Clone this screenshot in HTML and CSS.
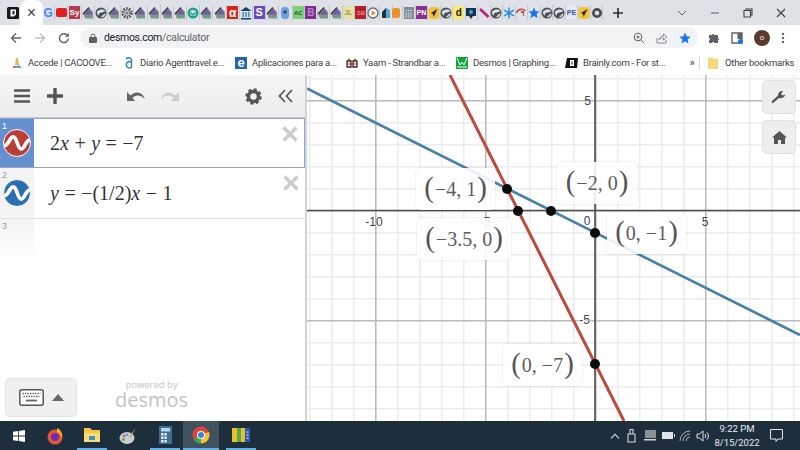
FILE: index.html
```html
<!DOCTYPE html>
<html lang="en">
<head>
<meta charset="utf-8">
<title>Desmos | Graphing Calculator</title>
<link rel="stylesheet" href="styles.css">
</head>
<body>
<svg class="defs" width="0" height="0" aria-hidden="true">
  <symbol id="dz" viewBox="0 0 12 14">
    <path d="M1 8 7 1.5 11 6v6.5H3z" fill="#8a8f94"/>
    <path d="M2.5 8 7 3l3 3.5V11z" fill="#7a5aa8"/>
    <path d="M2 9 6 12h5V8.500z" fill="#6f9f7f"/>
    <path d="M1 8 7 1.500" stroke="#2c3a36" stroke-width="1.300" fill="none"/>
  </symbol>
  <symbol id="globe" viewBox="0 0 12 14">
    <circle cx="6" cy="7" r="5.500" fill="#4b5257"/>
    <path d="M2 5.500C5 2.500 9 3 10.500 5L7 6.500C5 6 3.500 7 4 9.500 2.500 9 1.800 7 2 5.500zM6 11l3.500-3.500 1 .5C10 10 8 12 6 11z" fill="#dfe3e6"/>
  </symbol>
  <symbol id="wave" viewBox="0 0 28 28">
    <path d="M0 17C5 17 6 7.500 10 7.500 14 7.500 14.500 20.500 18.500 20.500 22.500 20.500 23 11 28 11" fill="none" stroke="#fff" stroke-width="4"/>
  </symbol>
</svg>

<header class="chrome">
  <div class="tabstrip">
    <span class="pin-tab"><svg width="14" height="14" viewBox="0 0 14 14"><rect x="1" y="1" width="12" height="12" rx="1.500" fill="#17181a"/><path d="M4.500 3.500h5.500v5l-2 2h-3.500z" fill="#fff"/><rect x="6.500" y="5" width="2" height="3.500" fill="#17181a"/></svg></span>
    <span class="active-tab">×</span>
    <div class="fav-group fav-wide">
      <span class="fav"><b class="g">G</b></span>
      <span class="fav"><i class="yt"></i></span>
      <span class="fav"><b class="box sy">Sy</b></span>
      <span class="fav"><svg class="ic"><use href="#dz"/></svg></span>
      <span class="fav"><svg class="ic"><use href="#globe"/></svg></span>
      <span class="fav"><svg class="ic"><use href="#dz"/></svg></span>
      <span class="fav"><svg width="12" height="14" viewBox="0 0 12 14"><circle cx="6" cy="7" r="4" fill="none" stroke="#555" stroke-width="3.500" stroke-dasharray="1.500 1"/><circle cx="6" cy="7" r="1.500" fill="#777"/></svg></span>
      <span class="fav"><svg class="ic"><use href="#dz"/></svg></span>
      <span class="fav"><svg class="ic"><use href="#dz"/></svg></span>
      <span class="fav"><svg class="ic"><use href="#dz"/></svg></span>
      <span class="fav"><svg class="ic"><use href="#dz"/></svg></span>
      <span class="fav"><svg width="12" height="14" viewBox="0 0 12 14"><circle cx="6" cy="7" r="4.300" fill="none" stroke="#17a589" stroke-width="2.400"/><path d="M3.500 6.500 6 9l2.500-2.500" fill="none" stroke="#17a589" stroke-width="1.500"/></svg></span>
      <span class="fav"><svg class="ic"><use href="#dz"/></svg></span>
      <span class="fav"><svg class="ic"><use href="#dz"/></svg></span>
      <span class="fav"><b class="box alpha">α</b></span>
      <span class="fav"><svg width="12" height="14" viewBox="0 0 12 14"><path d="M6 1 .5 5h11zM1 12h10v1.500H1z" fill="#123f6d"/><path d="M2.500 6h1.500v5H2.500zM5.300 6h1.500v5H5.300zM8 6h1.500v5H8z" fill="#3c8dbc"/></svg></span>
      <span class="fav"><b class="box ess">S</b></span>
      <span class="fav"><svg class="ic"><use href="#dz"/></svg></span>
      <span class="fav"><svg width="12" height="14" viewBox="0 0 12 14"><rect x="2" y="1" width="8" height="12" rx="3.500" fill="#6f9fe0"/><circle cx="6" cy="6" r="1.800" fill="#204f8f"/></svg></span>
      <span class="fav"><b class="box ac">AC</b></span>
      <span class="fav"><b class="box pur">B</b></span>
      <span class="fav"><svg class="ic"><use href="#dz"/></svg></span>
      <span class="fav"><svg class="ic"><use href="#dz"/></svg></span>
      <span class="fav"><b class="box yel">JL</b></span>
      <span class="fav"><b class="box red">SB</b></span>
      <span class="fav"><svg width="12" height="14" viewBox="0 0 12 14"><circle cx="6" cy="7" r="5" fill="#fff" stroke="#5a6b75" stroke-width="1.300"/><path d="M4.500 4.500 9 7l-4.500 2.500z" fill="#e58a1f"/></svg></span>
      <span class="fav"><svg width="12" height="14" viewBox="0 0 12 14"><path d="M6 2 10 5v7H2V6z" fill="#17324a"/><path d="M6 2 10 5v7H6z" fill="#5aa7c7"/></svg></span>
    </div>
    <div class="fav-group fav-narrow">
      <span class="fav"><svg width="12" height="14" viewBox="0 0 12 14"><rect x="2" y="2" width="8" height="10" rx="2.500" fill="#ee8f2c"/></svg></span>
      <span class="fav"><svg width="12" height="14" viewBox="0 0 12 14"><rect x="1" y="1" width="10" height="12" fill="#7b8a94"/><path d="M2.500 4.500h7M2.500 7h7M2.500 9h7M2.500 11h7" stroke="#e6e9eb" stroke-width="1" stroke-dasharray="1.500 .8"/></svg></span>
      <span class="fav"><b class="box pn">PN</b></span>
      <span class="fav"><svg width="12" height="14" viewBox="0 0 12 14"><rect x=".500" y="1" width="11" height="12" rx="3" fill="#f3c23d"/><path d="M9.500 3 3 7l2 1 .5 3z" fill="#27282a"/></svg></span>
      <span class="fav"><svg class="ic"><use href="#globe"/></svg></span>
      <span class="fav"><b class="box dd">d</b></span>
      <span class="fav"><svg width="12" height="14" viewBox="0 0 12 14"><path d="M1 2h10v8H8l-2 3-2-3H1z" fill="#12344f"/><circle cx="6" cy="6" r="2" fill="#4fa3c7"/></svg></span>
      <span class="fav"><svg width="12" height="14" viewBox="0 0 12 14"><path d="M2 3 10.500 11" stroke="#c2187f" stroke-width="2.600"/></svg></span>
      <span class="fav"><svg class="ic"><use href="#globe"/></svg></span>
      <span class="fav"><svg width="12" height="14" viewBox="0 0 12 14"><path d="M6 1.500v11M1.200 4.200l9.600 5.600M10.800 4.200 1.200 9.800" stroke="#1f8fd6" stroke-width="1.500"/></svg></span>
      <span class="fav"><svg width="12" height="14" viewBox="0 0 12 14"><path d="M1.500 7C2.500 3 8 2 10.500 5" fill="none" stroke="#c0504d" stroke-width="1.600"/><path d="M6 5h3v5H8V7H6z" fill="#c0504d"/></svg></span>
      <span class="fav"><svg width="12" height="14" viewBox="0 0 12 14"><path d="M6 1.500 7.600 5.200l4 .3-3 2.600 1 3.900L6 9.900 2.400 12l1-3.900-3-2.600 4-.3z" fill="#1a73e8"/></svg></span>
      <span class="fav"><svg class="ic"><use href="#globe"/></svg></span>
      <span class="fav"><svg class="ic"><use href="#globe"/></svg></span>
      <span class="fav"><b class="box pe">PE</b></span>
      <span class="fav"><svg width="12" height="14" viewBox="0 0 12 14"><rect x=".500" y="1" width="11" height="12" rx="3" fill="#f3c23d"/><path d="M9.500 3 3 7l2 1 .5 3z" fill="#27282a"/></svg></span>
      <span class="fav"><svg width="12" height="14" viewBox="0 0 12 14"><circle cx="6" cy="7" r="5" fill="#4a4f52"/><circle cx="6" cy="7" r="2.300" fill="#dfe1e3"/></svg></span>
    </div>
    <svg class="newtab" width="12" height="12" viewBox="0 0 12 12"><path d="M6 1v10M1 6h10" stroke="#2f3235" stroke-width="1.700"/></svg>
    <div class="win-ctrl">
      <svg width="10" height="6" viewBox="0 0 10 6"><path d="M1 1 5 5l4-4" fill="none" stroke="#5f6368" stroke-width="1"/></svg>
      <svg width="10" height="10" viewBox="0 0 10 10"><path d="M1 5h8" stroke="#5f6368" stroke-width="1.100"/></svg>
      <svg width="10" height="10" viewBox="0 0 10 10"><path d="M1 2.500h6.500V9H1zM3 2.500V1h6v6H7.500" fill="none" stroke="#3c4043" stroke-width="1.100"/></svg>
      <svg width="10" height="10" viewBox="0 0 10 10"><path d="M1 1 9 9M9 1 1 9" stroke="#3c4043" stroke-width="1.100"/></svg>
    </div>
  </div>

  <div class="toolbar">
    <svg class="nav" width="12" height="12" viewBox="0 0 12 12"><path d="M11 6H2M6 1.500 1.500 6 6 10.500" fill="none" stroke="#5f6368" stroke-width="1.400"/></svg>
    <svg class="nav" width="12" height="12" viewBox="0 0 12 12"><path d="M1 6h9M6 1.500 10.500 6 6 10.500" fill="none" stroke="#bdc1c6" stroke-width="1.400"/></svg>
    <svg class="nav" width="12" height="12" viewBox="0 0 12 12"><path d="M10.300 6.500A4.400 4.400 0 1 1 9 3" fill="none" stroke="#5f6368" stroke-width="1.400"/><path d="M10.800 .8v4h-4z" fill="#5f6368"/></svg>
    <div class="omnibox">
      <svg width="8" height="10" viewBox="0 0 8 10"><rect y="4" width="8" height="6" rx="1" fill="#5f6368"/><path d="M2 4.500V3a2 2 0 0 1 4 0v1.500" fill="none" stroke="#5f6368"/></svg>
      <span class="url">desmos.com<span class="url-path">/calculator</span></span>
      <span class="omni-right">
        <svg width="12" height="12" viewBox="0 0 12 12"><circle cx="5" cy="5" r="3.700" fill="none" stroke="#5f6368" stroke-width="1.100"/><path d="M7.800 7.800 11 11M3.300 5h3.400M5 3.300v3.400" stroke="#5f6368"/></svg>
        <svg width="12" height="12" viewBox="0 0 12 12"><path d="M1 6v5h9V8M3 8C3 5 6 4 7.500 4V2L11 5 7.500 8V6C6 6 4 6.500 3 8z" fill="none" stroke="#80868b" stroke-width=".9"/></svg>
        <svg width="12" height="12" viewBox="0 0 12 12"><path d="M6 .6 7.600 4.300l4 .4-3 2.700.9 4L6 9.300 2.500 11.400l.9-4-3-2.700 4-.4z" fill="#1a73e8"/></svg>
      </span>
    </div>
    <div class="tool-right">
      <svg width="12" height="12" viewBox="0 0 12 12"><path d="M1 3h2.800a1.400 1.400 0 0 1 2.600 0H10v3a1.400 1.400 0 0 1 0 2.600V11H6.500a1.400 1.400 0 0 0-2.600 0H1V8.500a1.400 1.400 0 0 0 0-2.600z" fill="#5f6368"/></svg>
      <svg width="12" height="12" viewBox="0 0 12 12"><path d="M1 1h10v10H1z" fill="#fff" stroke="#5f6368" stroke-width="1.400"/><rect x="6.500" y="1" width="4.500" height="6" fill="#5f6368"/><circle cx="9.500" cy="9.500" r="2.500" fill="#1a73e8"/></svg>
      <span class="avatar">o</span>
      <svg width="4" height="12" viewBox="0 0 4 12"><circle cx="2" cy="2" r="1.200" fill="#5f6368"/><circle cx="2" cy="6" r="1.200" fill="#5f6368"/><circle cx="2" cy="10" r="1.200" fill="#5f6368"/></svg>
    </div>
  </div>

  <nav class="bookmarks">
    <span class="bm"><svg width="12" height="12" viewBox="0 0 12 12"><path d="M1 11h10L8 8z" fill="#5aa7d6"/><path d="M4 8l1-7h2l1 7z" fill="#e8b45a"/><path d="M2 9h3v2H2z" fill="#d86a5a"/></svg>Accede | CACOOVE...</span>
    <span class="bm"><svg width="12" height="14" viewBox="0 0 12 14"><path d="M3 3C5 1 8 1.500 8.500 4V12M8.500 6.500A3 3.200 0 1 0 8.500 11" fill="none" stroke="#2e86ab" stroke-width="1.400"/></svg>Diario Agenttravel.e...</span>
    <span class="bm"><b class="bm-e">e</b>Aplicaciones para a...</span>
    <span class="bm"><svg width="12" height="12" viewBox="0 0 12 12"><path d="M1 4h4v6H1zM7 4h4v6H7z" fill="none" stroke="#2a2a2a" stroke-width="1.300"/><path d="M1 7h10M2 2l3 2M10 2 7 4" stroke="#b3261e" stroke-width="1.100"/></svg>Yaam - Strandbar a...</span>
    <span class="bm"><svg width="12" height="12" viewBox="0 0 12 12"><rect width="12" height="12" fill="#11a83a"/><path d="M1 1 4 8l2-3 2 3 3-7M1 10h10" fill="none" stroke="#fff" stroke-width="1"/></svg>Desmos | Graphing...</span>
    <span class="bm"><svg width="13" height="12" viewBox="0 0 13 12"><path d="M2 1h11l-1 10H0z" fill="#111"/><path d="M5 3h4v6H5z" fill="#fff"/><path d="M6.500 4.500h1v3h-1z" fill="#111"/></svg>Brainly.com - For st...</span>
    <span class="bm-more">»</span>
    <span class="bm-sep"></span>
    <span class="bm bm-other"><svg width="10" height="12" viewBox="0 0 10 12"><path d="M0 1.500a1 1 0 0 1 1-1h2.500l1 1H9a1 1 0 0 1 1 1V11a1 1 0 0 1-1 1H1a1 1 0 0 1-1-1z" fill="#f6d77b"/></svg>Other bookmarks</span>
  </nav>
</header>

<main class="app">
  <aside class="panel">
    <div class="panel-top">
      <svg width="16" height="14" viewBox="0 0 16 14"><path d="M0 1.500h16M0 7h16M0 12.500h16" stroke="#555" stroke-width="2.400"/></svg>
      <svg class="plus" width="16" height="16" viewBox="0 0 16 16"><path d="M8 0v16M0 8h16" stroke="#555" stroke-width="3.400"/></svg>
      <svg class="undo" width="20" height="12" viewBox="0 0 20 12"><path d="M1 2v9h8L6.500 8C9 4.500 14 4.500 19 9 17 3.500 11 -.5 4.500 5.500z" fill="#666"/></svg>
      <svg class="redo" width="20" height="12" viewBox="0 0 20 12"><path d="M19 2v9h-8l2.500-3C11 4.500 6 4.500 1 9 3 3.500 9 -.5 15.500 5.500z" fill="#ccc"/></svg>
      <svg class="gear" width="17" height="17" viewBox="0 0 17 17"><circle cx="8.500" cy="8.500" r="5" fill="none" stroke="#555" stroke-width="3.500"/><circle cx="8.500" cy="8.500" r="7" fill="none" stroke="#555" stroke-width="2.500" stroke-dasharray="3 2.500"/></svg>
      <svg class="collapse" width="15" height="14" viewBox="0 0 15 14"><path d="M7 1 1.500 7 7 13M14 1 8.500 7 14 13" fill="none" stroke="#555" stroke-width="1.700"/></svg>
    </div>
    <div class="row row-active">
      <div class="row-tab"><span class="row-num">1</span><svg class="curve curve-red" viewBox="0 0 28 28"><use href="#wave"/></svg></div>
      <div class="math"><span>2<em>x</em></span><span class="op">+</span><em>y</em><span class="op">=</span><span>−7</span></div>
      <svg class="del" width="16" height="16" viewBox="0 0 16 16"><path d="M1.500 1.500l13 13M14.500 1.500l-13 13" stroke="#ccc" stroke-width="3.400"/></svg>
    </div>
    <div class="row">
      <div class="row-tab"><span class="row-num">2</span><svg class="curve curve-blue" viewBox="0 0 28 28"><use href="#wave"/></svg></div>
      <div class="math"><em>y</em><span class="op">=</span><span>−(1/2)<em>x</em></span><span class="op">−</span><span>1</span></div>
      <svg class="del" width="16" height="16" viewBox="0 0 16 16"><path d="M1.500 1.500l13 13M14.500 1.500l-13 13" stroke="#ccc" stroke-width="3.400"/></svg>
    </div>
    <div class="row row-empty">
      <div class="row-tab"><span class="row-num">3</span></div>
    </div>
    <div class="panel-foot">
      <div class="kbd">
        <svg width="25" height="17" viewBox="0 0 25 17"><rect x=".8" y=".8" width="23.400" height="15.400" rx="2" fill="#fff" stroke="#555" stroke-width="1.500"/><path d="M3.500 4.500h18M4.500 7.500h16" stroke="#666" stroke-width="1.500" stroke-dasharray="1.500 1"/><path d="M7 11.500h11" stroke="#666" stroke-width="1.800"/></svg>
        <svg width="12" height="7" viewBox="0 0 12 7"><path d="M6 0 12 7H0z" fill="#666"/></svg>
      </div>
      <div class="powered"><span class="pw-small">powered by</span><span class="pw-big">desmos</span></div>
    </div>
  </aside>

  <section class="graph">
    <svg class="plot" width="493" height="346" viewBox="0 0 493 346">
      <defs>
        <pattern id="minor" width="22" height="22" patternUnits="userSpaceOnUse" patternTransform="translate(2 3)">
          <path d="M0 0V22M0 0H22" stroke="#ececec" stroke-width="3" fill="none"/>
        </pattern>
        <pattern id="major" width="110" height="110" patternUnits="userSpaceOnUse" patternTransform="translate(68 25)">
          <path d="M0 0V110M0 0H110" stroke="#bcbcbc" stroke-width="3" fill="none"/>
        </pattern>
      </defs>
      <rect width="493" height="346" fill="#fff"/>
      <rect width="493" height="346" fill="url(#minor)"/>
      <rect width="493" height="346" fill="url(#major)"/>
      <path d="M288 0V346M0 135.500H493" stroke="#4e4e4e" stroke-width="1.600"/>
      <g class="tick">
        <text x="67" y="151" text-anchor="middle">-10</text>
        <text x="178" y="151" text-anchor="middle">-5</text>
        <text x="280" y="150" text-anchor="middle">0</text>
        <text x="398" y="151" text-anchor="middle">5</text>
        <text x="284" y="30" text-anchor="end">5</text>
      </g>
      <path d="M0 13.500 493 260" stroke="#4a7fa8" stroke-width="2.600"/>
      <path d="M143 0 317 346" stroke="#bb4a40" stroke-width="3"/>
      <text class="tick-over" x="283" y="249" text-anchor="end">-5</text>
    </svg>
    <div class="lbl lbl-a"><span class="paren">(</span>−4, 1<span class="paren">)</span></div>
    <div class="lbl lbl-b"><span class="paren">(</span>−2, 0<span class="paren">)</span></div>
    <div class="lbl lbl-c"><span class="paren">(</span>−3.5, 0<span class="paren">)</span></div>
    <div class="lbl lbl-d"><span class="paren">(</span>0, −1<span class="paren">)</span></div>
    <div class="lbl lbl-e"><span class="paren">(</span>0, −7<span class="paren">)</span></div>
    <span class="dot dot-a"></span>
    <span class="dot dot-b"></span>
    <span class="dot dot-c"></span>
    <span class="dot dot-d"></span>
    <span class="dot dot-e"></span>
    <div class="side-btns">
      <div class="side-btn"><svg width="16" height="16" viewBox="0 0 16 16"><path d="M1.500 14.500 8 9c2 .8 5 0 6.500-3.500L12 6.500 10 5l2-3C9 1.500 7 3.500 7 6.500L.5 12.500z" fill="#555"/></svg></div>
      <div class="side-btn"><svg width="15" height="13" viewBox="0 0 15 13"><path d="M7.500 0 15 6.500h-2V13H9V9H6v4H2V6.500H0z" fill="#555"/></svg></div>
    </div>
  </section>
</main>

<footer class="taskbar">
  <span class="tb-start"><svg width="12" height="12" viewBox="0 0 12 12"><path d="M0 1.800 5 1v4.600H0zM5.800.9 12 0v5.600H5.800zM0 6.400h5V11l-5-.7zM5.800 6.400H12V12l-6.200-.9z" fill="#fff"/></svg></span>
  <span class="tb-app"><svg width="18" height="18" viewBox="0 0 18 18"><circle cx="9" cy="10" r="7.500" fill="#e8562c"/><circle cx="9" cy="10" r="4" fill="#6b2fb5"/><path d="M11 1c4 2 6 6 5 10-1-3-3-5-5-6z" fill="#ffb12b"/></svg></span>
  <span class="tb-app open"><svg width="18" height="16" viewBox="0 0 18 16"><path d="M1 1h6l2 2h8v12H1z" fill="#f4c542"/><rect x="1" y="6" width="16" height="9" fill="#f9dc7a"/><rect x="6" y="9" width="6" height="4" fill="#3f8fc4"/></svg></span>
  <span class="tb-app"><svg width="18" height="18" viewBox="0 0 18 18"><ellipse cx="8" cy="11" rx="7.500" ry="6" fill="#c9cdd0"/><circle cx="5" cy="9" r="1.300" fill="#d94f3d"/><circle cx="8" cy="7.800" r="1.300" fill="#4aa3df"/><circle cx="4.500" cy="12.500" r="1.300" fill="#3f9e5a"/><path d="M16.500 1 10 10l1.500 1z" fill="#d9a441"/></svg></span>
  <span class="tb-app open"><svg width="13" height="18" viewBox="0 0 13 18"><rect width="13" height="18" fill="#3c6f94"/><rect x="2" y="2" width="9" height="3.500" fill="#b8d3e6"/><path d="M2 7h2.500v2.500H2zM5.300 7h2.500v2.500H5.300zM2 10.500h2.500V13H2zM5.300 10.500h2.500V13H5.300zM2 14h2.500v2.500H2zM5.300 14h2.500v2.500H5.300z" fill="#dfe7ec"/></svg></span>
  <span class="tb-app open active"><svg width="18" height="18" viewBox="0 0 18 18"><circle cx="9" cy="9" r="8.500" fill="#e0433a"/><path d="M9 9 16.900 6A8.500 8.500 0 0 1 9 17.500z" fill="#f4c430"/><path d="M9 9 9 17.500A8.500 8.500 0 0 1 1.600 13.300z" fill="#3aa757"/><circle cx="9" cy="9" r="4" fill="#fff"/><circle cx="9" cy="9" r="3" fill="#3b82e0"/></svg></span>
  <span class="tb-app open"><svg width="18" height="14" viewBox="0 0 18 14"><rect width="5" height="14" fill="#e8c12f"/><rect x="5" width="4" height="14" fill="#5aa84a"/><rect x="9" width="4" height="14" fill="#e8c12f"/><rect x="13" width="5" height="14" fill="#2a55b0"/><path d="M14.500 4h2M14.500 7h2M14.500 10h2" stroke="#fff"/></svg></span>
  <div class="tray">
    <svg width="10" height="6" viewBox="0 0 10 6"><path d="M1 5.500 5 1.200l4 4.300" fill="none" stroke="#e6e9eb" stroke-width="1.100"/></svg>
    <svg class="tray-far" width="9" height="15" viewBox="0 0 9 15"><path d="M1 6h7v8H1zM3 1.500h3V6H3z" fill="none" stroke="#cfd6da" stroke-width="1.100"/></svg>
    <svg class="tray-far" width="14" height="13" viewBox="0 0 14 13"><rect x="2" y="1" width="11" height="8" fill="#8a9297"/><path d="M1 10h12v1.500H1z" fill="#cfd6da"/></svg>
    <svg class="tray-near" width="14" height="9" viewBox="0 0 14 9"><rect x="1" y="1" width="11" height="7" fill="#dfe4e7"/><path d="M13 3h1v3h-1z" fill="#dfe4e7"/></svg>
    <svg class="tray-near" width="13" height="12" viewBox="0 0 13 12"><path d="M1 11A10 10 0 0 1 11 1M4 11A7 7 0 0 1 11 4M7 11A4 4 0 0 1 11 7" fill="none" stroke="#a9b2b7"/></svg>
    <svg class="tray-near" width="13" height="12" viewBox="0 0 13 12"><path d="M1 4h2.500L7 1v10L3.500 8H1z" fill="none" stroke="#dfe4e7"/><path d="M9 4a3 3 0 0 1 0 4M11 2.500a5 5 0 0 1 0 7" fill="none" stroke="#dfe4e7"/></svg>
    <div class="clock"><span>9:22 PM</span><span>8/15/2022</span></div>
    <svg class="notify" width="13" height="13" viewBox="0 0 13 13"><path d="M.5.500h12v9.500H8L6 12.500V10H.5z" fill="none" stroke="#e6e9eb"/></svg>
  </div>
</footer>
</body>
</html>
```
FILE: styles.css
```css
* { box-sizing: border-box; }
html, body { margin: 0; padding: 0; }
body {
  width: 800px;
  height: 450px;
  overflow: hidden;
  display: flex;
  flex-direction: column;
  font-family: Roboto, "Liberation Sans", sans-serif;
  background: #fff;
}
.defs { display: block; height: 0; }
svg { display: block; flex: none; }

/* browser chrome */
.chrome { flex: none; height: 75px; display: flex; flex-direction: column; }
.tabstrip {
  height: 25px;
  background: #dee1e6;
  display: flex;
  align-items: center;
  padding-left: 6px;
}
.pin-tab { width: 14px; display: flex; }
.active-tab {
  width: 23px;
  height: 25px;
  background: #fff;
  border-radius: 8px 8px 0 0;
  text-align: center;
  font: 16px/25px "Liberation Sans", sans-serif;
  color: #3c4043;
}
.fav-group { display: flex; }
.fav-wide { margin-left: -1px; }
.fav-narrow { margin-left: -2px; }
.fav {
  height: 15px;
  display: flex;
  align-items: center;
  justify-content: center;
  border-right: 1px solid #c4c7cb;
}
.fav-wide .fav { width: 13.200px; }
.fav-wide .fav:nth-child(n+20) { width: 12.500px; }
.fav-narrow .fav { width: 12.520px; }
.ic { width: 12px; height: 14px; }
.fav b { font-family: "Liberation Sans", sans-serif; line-height: 1; }
.g { font-size: 12px; color: #4285f4; }
.yt { display: block; width: 11px; height: 9px; background: #e02020; border-radius: 2px; }
.box {
  width: 11px;
  height: 13px;
  display: flex;
  align-items: center;
  justify-content: center;
  font-size: 8px;
  color: #fff;
}
.sy { background: #b83a52; }
.alpha { background: #d8261c; font-size: 12px; }
.ess { background: #6a4bb8; font-size: 11px; }
.ac { background: #7fcf7a; color: #14532d; font-size: 6px; }
.pur { background: #7a2f8f; color: #b884c6; font-size: 10px; }
.yel { background: #e4e2a8; color: #a99a3a; font-size: 7px; }
.red { background: #b3202a; color: #e98a8a; font-size: 6px; }
.pn { background: #8a2f8f; font-size: 7px; }
.dd { background: #f7ea74; color: #222; font-size: 10px; }
.pe { background: #e6eaf7; color: #3a4fb0; font-size: 7px; }
.newtab { margin-left: 9px; }
.win-ctrl {
  margin-left: 53px;
  display: flex;
  align-items: center;
  gap: 23px;
}

.toolbar {
  height: 25px;
  background: #fff;
  display: flex;
  align-items: center;
  padding-left: 10px;
  gap: 12px;
}
.omnibox {
  width: 618px;
  height: 21px;
  margin-left: -2px;
  background: #f1f3f4;
  border-radius: 11px;
  display: flex;
  align-items: center;
  padding-left: 9px;
}
.url { margin-left: 7px; font-size: 10.500px; letter-spacing: -.3px; color: #202124; }
.url-path { color: #5f6368; }
.omni-right { margin-left: auto; margin-right: 7px; display: flex; gap: 11px; }
.tool-right { display: flex; align-items: center; gap: 11px; margin-left: -2px; }
.avatar {
  width: 16px;
  height: 16px;
  border-radius: 50%;
  background: #5c3b2e;
  color: #eee;
  font-size: 8px;
  line-height: 15px;
  text-align: center;
}

.bookmarks {
  height: 25px;
  background: #fff;
  display: grid;
  grid-template-columns: 112px 112px 111px 110px 109px 120px 14px 9px auto;
  align-items: center;
  padding-left: 11px;
  font-size: 9.500px;
  letter-spacing: -.25px;
  color: #3c4043;
}
.bm { display: flex; align-items: center; gap: 5px; white-space: nowrap; }
.bm-other { gap: 7px; }
.bm-e {
  width: 12px;
  height: 12px;
  background: #1f66b8;
  color: #fff;
  font: bold 13px/11px "Liberation Sans", sans-serif;
  text-align: center;
}
.bm-more { font-size: 11px; text-align: center; }
.bm-sep { width: 1px; height: 14px; background: #dadce0; }

/* calculator */
.app { flex: 1; min-height: 0; display: flex; }
.panel {
  flex: none;
  width: 307px;
  border-right: 2px solid #d4d4d4;
  display: flex;
  flex-direction: column;
  background: #fff;
}
.panel-top {
  height: 43px;
  flex: none;
  background: linear-gradient(#f6f6f6, #ececec);
  border-bottom: 1px solid #ccc;
  display: flex;
  align-items: center;
  padding-left: 14px;
}
.plus { margin-left: 17px; }
.undo { margin-left: 63px; }
.redo { margin-left: 14px; }
.gear { margin-left: 65px; }
.collapse { margin-left: 16px; }
.row {
  height: 51px;
  flex: none;
  display: flex;
  align-items: center;
  position: relative;
  border-bottom: 1px solid #e2e2e2;
}
.row-active { height: 50px; border: 1px solid #8aa7cf; border-left: 0; }
.row-tab {
  width: 34px;
  height: 100%;
  flex: none;
  background: #f4f4f4;
  position: relative;
  display: flex;
  align-items: center;
  justify-content: center;
}
.row-active .row-tab { background: #6590cf; }
.row-num {
  position: absolute;
  left: 2px;
  top: 2px;
  font: 9px "Liberation Sans", sans-serif;
  color: #999;
}
.row-active .row-num { color: #fff; }
.curve { width: 28px; height: 28px; border-radius: 50%; border: 1px solid #fff; }
.curve-red { background: #bb3d38; }
.curve-blue { background: #2a6fb0; }
.math {
  margin-left: 16px;
  display: flex;
  align-items: baseline;
  font: 20px "Liberation Serif", serif;
  color: #333;
  white-space: nowrap;
}
.op { margin: 0 5.500px; }
.del { position: absolute; right: 6px; top: 7px; }
.row-empty { height: 46px; border-bottom: 0; }
.row-empty .row-tab { background: linear-gradient(#f4f4f4, #fff); }
.panel-foot {
  flex: 1;
  display: flex;
  align-items: flex-end;
  padding: 0 0 4px 5px;
}
.kbd {
  width: 72px;
  height: 39px;
  background: #f0f0f0;
  border: 1px solid #e2e2e2;
  border-radius: 5px;
  display: flex;
  align-items: center;
  justify-content: center;
  gap: 8px;
}
.powered {
  margin: 0 0 7px 38px;
  display: flex;
  flex-direction: column;
  align-items: center;
  color: #c4c4c4;
  font-family: "Open Sans", sans-serif;
}
.pw-small { font-size: 9.500px; line-height: 11px; }
.pw-big { font-size: 20px; line-height: 20px; }

.graph { flex: 1; position: relative; overflow: hidden; }
.plot { position: absolute; left: 0; top: 0; }
.tick text, .tick-over { font: 12px "Liberation Sans", sans-serif; fill: #444; }
.tick-over { paint-order: stroke; stroke: #fff; stroke-width: 2px; }
.lbl {
  position: absolute;
  height: 42px;
  background: rgba(255, 255, 255, .88);
  border-radius: 5px;
  box-shadow: 0 0 2px rgba(0, 0, 0, .16);
  display: flex;
  align-items: center;
  justify-content: center;
  font: 20px "Liberation Serif", serif;
  color: #5c5c5c;
  white-space: nowrap;
}
.paren { font-size: 29px; line-height: 1; color: #555; margin: -3px 1px 0; }
.lbl-a { left: 109px; top: 93px; width: 79px; }
.lbl-b { left: 250px; top: 87px; width: 80px; }
.lbl-c { left: 110px; top: 143px; width: 94px; }
.lbl-d { left: 300px; top: 137px; width: 79px; }
.lbl-e { left: 196px; top: 269px; width: 79px; }
.dot {
  position: absolute;
  width: 10px;
  height: 10px;
  margin: -5px 0 0 -5px;
  background: #0c0c0c;
  border-radius: 50%;
}
.dot-a { left: 200px; top: 114px; }
.dot-b { left: 211px; top: 135.500px; }
.dot-c { left: 244px; top: 135.500px; }
.dot-d { left: 288px; top: 158px; }
.dot-e { left: 288px; top: 289px; }
.side-btns {
  position: absolute;
  right: 4px;
  top: 5px;
  display: flex;
  flex-direction: column;
  gap: 6px;
}
.side-btn {
  width: 34px;
  height: 34px;
  background: #eee;
  border: 1px solid #e2e2e2;
  border-radius: 5px;
  display: flex;
  align-items: center;
  justify-content: center;
}

/* taskbar */
.taskbar {
  flex: none;
  height: 29px;
  background: #1d2f3c;
  display: flex;
  align-items: stretch;
  color: #e8ecef;
}
.tb-start { width: 37px; display: flex; align-items: center; justify-content: center; }
.tb-app {
  width: 36px;
  display: flex;
  align-items: center;
  justify-content: center;
}
.tb-app.open { border-bottom: 2px solid #66afe0; margin: 0 3px 0 4px; width: 30px; }
.tb-app.active { background: #41525f; width: 36px; margin: 0 3px 0 0; }
.tray {
  margin-left: auto;
  display: flex;
  align-items: center;
  padding-right: 17px;
}
.tray-far { margin-left: 7px; }
.tray-near { margin-left: 4px; }
.clock {
  display: flex;
  flex-direction: column;
  align-items: center;
  width: 42px;
  margin-left: 7px;
  font: 9.500px/14px Roboto, sans-serif;
}
.notify { margin-left: 12px; }
```
